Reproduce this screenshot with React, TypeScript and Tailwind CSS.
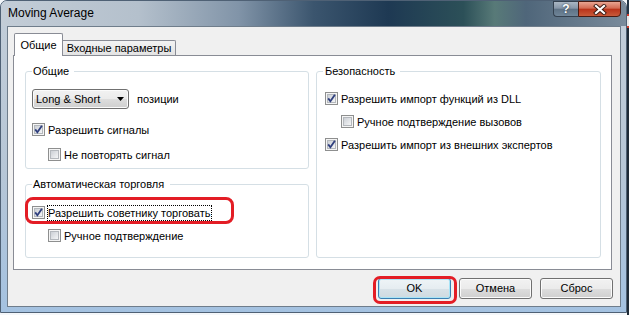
import React from "react";

const font = "font-['Liberation_Sans',Arial,sans-serif]";

function Check({ checked }: { checked: boolean }) {
  return (
    <svg width="13" height="13" viewBox="0 0 13 13" className="shrink-0">
      <defs>
        <linearGradient id="cbg" x1="0" y1="0" x2="1" y2="1">
          <stop offset="0" stopColor="#c9cdd3" />
          <stop offset="1" stopColor="#f7f8f9" />
        </linearGradient>
      </defs>
      <rect x="0.5" y="0.5" width="12" height="12" fill="#f5f5f5" stroke="#8e8f8f" />
      <rect x="2.5" y="2.5" width="8" height="8" fill="url(#cbg)" stroke="#b4b8bd" />
      {checked && (
        <path d="M3.2 6.4l2.2 2.9L9.9 2.8" fill="none" stroke="#2f3f7e" strokeWidth="1.8" />
      )}
    </svg>
  );
}

function Row({
  checked,
  label,
  indent = false,
  focus = false,
}: {
  checked: boolean;
  label: string;
  indent?: boolean;
  focus?: boolean;
}) {
  return (
    <div className={`flex items-center h-[13px] ${indent ? "pl-[16px]" : ""} ${focus ? "gap-[2px]" : "gap-[3px]"}`}>
      <Check checked={checked} />
      {focus ? (
        <span className="border border-dotted border-black pr-[1px] leading-[14px] whitespace-nowrap">{label}</span>
      ) : (
        <span className="leading-[14px] whitespace-nowrap">{label}</span>
      )}
    </div>
  );
}

function Button({ label, primary = false }: { label: string; primary?: boolean }) {
  return (
    <div
      className={`w-[73px] h-[21px] rounded-[3px] border flex items-center justify-center text-[11px] text-black ${
        primary
          ? "border-[#3c7fb1] bg-[linear-gradient(#eef4f7_0%,#e6edf1_50%,#d8e2e8_51%,#cfdae0_100%)] shadow-[inset_0_0_0_1px_#a9e4f7]"
          : "border-[#707070] bg-[linear-gradient(#f2f2f2_0%,#ebebeb_50%,#dddddd_51%,#cfcfcf_100%)] shadow-[inset_0_0_0_1px_#fbfbfb]"
      }`}
    >
      {label}
    </div>
  );
}

export default function App() {
  return (
    <div className={`relative w-[629px] h-[315px] bg-[#f4f7fa] flex overflow-hidden ${font} text-[11px] text-black`}>
      {/* Window */}
      <div className="w-[627px] h-[313px] rounded-t-[7px] border border-[#4f6175] bg-[linear-gradient(180deg,#c3ced9_0%,#b6c6d6_55%,#a4c2e1_100%)] flex flex-col">
        {/* Title bar */}
        <div className="h-[25px] flex items-start rounded-t-[6px] bg-[linear-gradient(90deg,#c3cdd7_0%,#b4c0cc_22%,#8194a8_38%,#3b556e_50%,#1e3953_62%,#2c5058_74%,#587a78_79%,#4f667a_84%,#7a8b9b_100%)]">
          <span className="pl-[7px] mt-[5px] text-[12px] leading-[14px] text-black">Moving Average</span>
          <div className="ml-auto mr-[5px] flex h-[16px]">
            <div className="w-[25px] h-full border border-[#34414f] border-r-0 rounded-bl-[4px] bg-[linear-gradient(#aab7c4_0%,#8696a7_45%,#5e7285_50%,#6f8598_100%)] flex items-center justify-center">
              <span className="text-white font-bold text-[12px] leading-none [text-shadow:0_0_2px_#1a2530]">?</span>
            </div>
            <div className="w-[43px] h-full border border-[#4a1b12] rounded-br-[4px] bg-[linear-gradient(#e8a592_0%,#d26a52_45%,#b93219_50%,#c85a3a_100%)] flex items-center justify-center">
              <svg width="14" height="11" viewBox="0 0 14 11">
                <path d="M3 2l8 7M11 2l-8 7" stroke="#3a1a12" strokeWidth="4" strokeLinecap="square" />
                <path d="M3 2l8 7M11 2l-8 7" stroke="#ffffff" strokeWidth="2.2" strokeLinecap="square" />
              </svg>
            </div>
          </div>
        </div>

        {/* Client area */}
        <div className="ml-[6px] mr-[5px] h-[281px] border border-[#6f7d8b] bg-[#f0f0f0] flex flex-col">
          {/* Tabs */}
          <div className="h-[28px] flex items-end pl-[6px]">
            <div className="relative z-10 w-[49px] h-[23px] mb-[-1px] border border-b-0 border-[#898c95] rounded-t-[2px] bg-white flex justify-center pt-[4px]">
              <span className="leading-[14px]">Общие</span>
            </div>
            <div className="w-[113px] h-[15px] border border-b-0 border-l-0 border-[#898c95] rounded-tr-[2px] bg-[linear-gradient(#f3f3f3,#e3e3e3)] flex justify-center">
              <span className="leading-[14px]">Входные параметры</span>
            </div>
          </div>

          {/* Panel */}
          <div className="ml-[5px] w-[599px] h-[215px] border border-[#898c95] bg-white pt-[8px] pl-[11px] flex gap-[7px]">
            <div className="flex flex-col gap-[8px]">
              <fieldset className="w-[284px] h-[105px] border border-[#d5dfe5] rounded-[3px] px-[6px]">
                <legend className="pl-[1px] pr-[5px] leading-[14px]">Общие</legend>
                <div className="mt-[11px] flex items-center gap-[8px]">
                  <div className="w-[97px] h-[20px] rounded-[3px] border border-[#707070] bg-[linear-gradient(#f2f2f2_0%,#ebebeb_50%,#dddddd_51%,#cfcfcf_100%)] shadow-[inset_0_0_0_1px_#fbfbfb] flex items-center pl-[3px] pr-[4px]">
                    <span className="leading-[14px]">Long &amp; Short</span>
                    <svg width="7" height="4" viewBox="0 0 7 4" className="ml-auto">
                      <path d="M0 0h7L3.5 4z" fill="#000" />
                    </svg>
                  </div>
                  <span className="leading-[14px]">позиции</span>
                </div>
                <div className="mt-[14px] flex flex-col gap-[12px]">
                  <Row checked label="Разрешить сигналы" />
                  <Row checked={false} indent label="Не повторять сигнал" />
                </div>
              </fieldset>

              <fieldset className="w-[284px] h-[81px] border border-[#d5dfe5] rounded-[3px] px-[6px]">
                <legend className="pl-[1px] pr-[6px] leading-[14px]">Автоматическая торговля</legend>
                <div className="mt-[15px] flex flex-col gap-[10px]">
                  <Row checked focus label="Разрешить советнику торговать" />
                  <Row checked={false} indent label="Ручное подтверждение" />
                </div>
              </fieldset>
            </div>

            <fieldset className="w-[285px] h-[194px] border border-[#d5dfe5] rounded-[3px] px-[6px]">
              <legend className="pl-[2px] pr-[5px] leading-[14px]">Безопасность</legend>
              <div className="mt-[14px] pl-[2px] flex flex-col gap-[10px]">
                <Row checked label="Разрешить импорт функций из DLL" />
                <Row checked={false} indent label="Ручное подтверждение вызовов" />
                <Row checked label="Разрешить импорт из внешних экспертов" />
              </div>
            </fieldset>
          </div>

          {/* Buttons */}
          <div className="mt-[8px] pr-[7px] flex justify-end gap-[8px]">
            <Button primary label="OK" />
            <Button label="Отмена" />
            <Button label="Сброс" />
          </div>
        </div>
      </div>

      {/* Edge of the window behind */}
      <div className="w-[2px] h-full bg-[#1e2a36] flex flex-col">
        <div className="h-[14px] bg-[#243444]" />
        <div className="h-[2px] bg-[#d23a2a]" />
        <div className="h-[10px] bg-[#e8e8e8]" />
        <div className="h-[2px] bg-[#d23a2a]" />
      </div>

      {/* Red annotations */}
      <div className="absolute left-[25px] top-[197px] w-[209px] h-[27px] border-[3px] border-[#e31d25] rounded-[8px]" />
      <div className="absolute left-[373px] top-[276px] w-[84px] h-[28px] border-[3px] border-[#e31d25] rounded-[7px]" />
    </div>
  );
}
